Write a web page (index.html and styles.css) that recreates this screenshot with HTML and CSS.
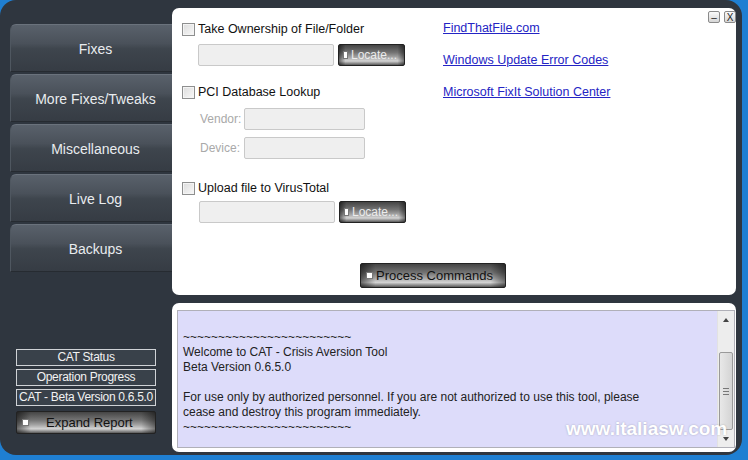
FILE: index.html
```html
<!DOCTYPE html>
<html lang="en">

<head>
    <meta charset="UTF-8">
    <title>CAT - Crisis Aversion Tool</title>
    <link rel="stylesheet" href="styles.css">
</head>

<body>
    <div class="window">
        <div class="sidebar">
            <div class="nav">
                <div class="nav-btn">Fixes</div>
                <div class="nav-btn">More Fixes/Tweaks</div>
                <div class="nav-btn">Miscellaneous</div>
                <div class="nav-btn">Live Log</div>
                <div class="nav-btn">Backups</div>
            </div>

            <div class="status">
                <div class="status-box">CAT Status</div>
                <div class="status-box">Operation Progress</div>
                <div class="status-box">CAT - Beta Version 0.6.5.0</div>
                <div class="metal expand"><span class="dot"></span>Expand Report</div>
            </div>
        </div>

        <div class="main">
            <div class="panel top-panel">
                <div class="win-ctrls">
                    <span class="ctrl">&ndash;</span>
                    <span class="ctrl">X</span>
                </div>

                <div class="form-area">
                    <div class="form">
                        <label class="check-row"><span class="checkbox"></span>Take Ownership of File/Folder</label>
                        <div class="path-row">
                            <span class="field path"></span>
                            <span class="metal locate"><span class="dot"></span>Locate...</span>
                        </div>

                        <label class="check-row pci"><span class="checkbox"></span>PCI Database Lookup</label>
                        <div class="kv-row">
                            <span class="kv-label">Vendor:</span>
                            <span class="field kv"></span>
                        </div>
                        <div class="kv-row">
                            <span class="kv-label">Device:</span>
                            <span class="field kv"></span>
                        </div>

                        <label class="check-row upload"><span class="checkbox"></span>Upload file to VirusTotal</label>
                        <div class="path-row second">
                            <span class="field path"></span>
                            <span class="metal locate"><span class="dot"></span>Locate...</span>
                        </div>
                    </div>

                    <div class="links">
                        <a href="#">FindThatFile.com</a>
                        <a href="#">Windows Update Error Codes</a>
                        <a href="#">Microsoft FixIt Solution Center</a>
                    </div>
                </div>

                <div class="metal process"><span class="dot"></span>Process Commands</div>
            </div>

            <div class="panel log-panel">
                <div class="log">
                    <div class="log-text">
                        <p>~~~~~~~~~~~~~~~~~~~~~~~~</p>
                        <p>Welcome to CAT - Crisis Aversion Tool</p>
                        <p>Beta Version 0.6.5.0</p>
                        <p>&nbsp;</p>
                        <p>For use only by authorized personnel. If you are not authorized to use this tool, please</p>
                        <p>cease and destroy this program immediately.</p>
                        <p>~~~~~~~~~~~~~~~~~~~~~~~~</p>
                    </div>
                    <div class="scrollbar">
                        <span class="arrow"><span class="tri up"></span></span>
                        <span class="track">
                            <span class="thumb"><span class="grip"></span></span>
                        </span>
                        <span class="arrow"><span class="tri down"></span></span>
                    </div>
                </div>
            </div>
        </div>

        <div class="watermark">www.italiasw.com</div>
    </div>
</body>

</html>
```

FILE: styles.css
```css
body {
    margin: 0;
    width: 748px;
    height: 460px;
    overflow: hidden;
    background-color: #1f7fd2;
    font-family: "Liberation Sans", Arial, sans-serif;
    font-size: 12px;
}

.window {
    position: relative;
    display: flex;
    width: 742px;
    height: 455px;
    background-color: #2f363f;
    border-radius: 16px;
}

/* left column */

.sidebar {
    display: flex;
    flex-direction: column;
    justify-content: space-between;
    width: 172px;
    padding: 24px 0 21px 0;
    box-sizing: border-box;
}

.nav {
    display: flex;
    flex-direction: column;
    gap: 2px;
    padding-left: 10px;
}

.nav-btn {
    height: 48px;
    line-height: 48px;
    text-align: center;
    margin-right: -8px;
    color: #e9ecef;
    font-size: 14px;
    background: linear-gradient(#59616b, #4a515a 40%, #3e454d 52%, #363c44);
    border-top: 1px solid #6a727c;
    border-left: 1px solid #4f5760;
    border-bottom: 1px solid #262b31;
    border-radius: 6px 0 0 0;
    box-sizing: border-box;
}

.status {
    display: flex;
    flex-direction: column;
    gap: 3px;
    padding-left: 16px;
}

.status-box {
    width: 140px;
    height: 17px;
    line-height: 15px;
    box-sizing: border-box;
    border: 1px solid #cfd2d6;
    background-color: #39414a;
    color: #f2f2f2;
    text-align: center;
    white-space: nowrap;
    letter-spacing: -0.3px;
}

/* metallic buttons */

.metal {
    display: flex;
    align-items: center;
    box-sizing: border-box;
    border: 1px solid #222;
    border-radius: 2px;
    background:
        linear-gradient(to right, rgba(0, 0, 0, 0.5), rgba(0, 0, 0, 0) 10%, rgba(0, 0, 0, 0) 90%, rgba(0, 0, 0, 0.45)),
        linear-gradient(#454545, #747474 38%, #a6a6a6 62%, #d4d4d4 80%, #5a5a5a 100%);
    color: #111;
}

.dot {
    width: 5px;
    height: 5px;
    margin: 0 3px 0 5px;
    border: 1px solid #777;
    background-color: #fff;
    flex-shrink: 0;
}

.expand {
    width: 140px;
    height: 23px;
    margin-top: 2px;
    font-size: 13px;
}

.expand .dot {
    margin: 0 17px 0 5px;
}

.locate {
    width: 67px;
    height: 22px;
    color: #ececec;
    font-size: 12px;
}

.locate .dot {
    width: 3px;
    height: 6px;
    margin: 0 3px 0 4px;
}

.process {
    width: 146px;
    height: 25px;
    margin: 0 0 0 178px;
    font-size: 13px;
}

/* main column */

.main {
    display: flex;
    flex-direction: column;
    gap: 8px;
    flex: 1;
    padding: 8px 6px 3px 0;
}

.panel {
    background-color: #fff;
    border-radius: 7px;
}

.top-panel {
    position: relative;
    height: 287px;
    padding: 11px 10px 0 10px;
    box-sizing: border-box;
}

.win-ctrls {
    position: absolute;
    top: 3px;
    right: 0;
    display: flex;
    gap: 4px;
}

.ctrl {
    width: 12px;
    height: 12px;
    line-height: 12px;
    font-size: 10px;
    text-align: center;
    border: 1px solid #8a8a8a;
    border-radius: 2px;
    background: linear-gradient(#fafafa, #d6d6d6);
    color: #222;
    box-sizing: border-box;
}

.form-area {
    display: flex;
    height: 244px;
}

.form {
    display: flex;
    flex-direction: column;
    width: 261px;
}

.check-row {
    display: flex;
    align-items: center;
    gap: 3px;
    height: 18px;
    margin-top: 1px;
    color: #111;
    font-size: 12.5px;
}

.checkbox {
    width: 13px;
    height: 13px;
    box-sizing: border-box;
    border: 1px solid #8e8f8f;
    background: linear-gradient(135deg, #dcdcdc, #f8f8f8);
    box-shadow: inset 0 0 0 1px #f4f4f4;
}

.check-row.pci {
    margin-top: 17px;
}

.check-row.upload {
    margin-top: 20px;
}

.path-row {
    display: flex;
    gap: 4px;
    margin: 6px 0 0 16px;
}

.path-row.second {
    margin: 4px 0 0 17px;
}

.field {
    display: block;
    height: 22px;
    box-sizing: border-box;
    border: 1px solid #c9c9c9;
    border-radius: 2px;
    background-color: #efefef;
}

.path {
    width: 136px;
}

.kv-row {
    display: flex;
    align-items: center;
    margin: 7px 0 0 18px;
}

.kv-label {
    width: 44px;
    color: #a9a9a9;
    font-size: 12px;
}

.kv {
    width: 121px;
}

.links {
    display: flex;
    flex-direction: column;
    gap: 17px;
    padding-top: 2px;
}

.links a {
    color: #2424c4;
    font-size: 12.5px;
    line-height: 15px;
}

/* log */

.log-panel {
    height: 149px;
    padding: 7px 1px 0 5px;
    box-sizing: border-box;
}

.log {
    display: flex;
    height: 136px;
    border: 1px solid #b0b0b8;
    background-color: #dddcfa;
}

.log-text {
    flex: 1;
    padding: 19px 0 0 5px;
    color: #222;
    line-height: 15px;
}

.log-text p {
    margin: 0;
}

.scrollbar {
    display: flex;
    flex-direction: column;
    width: 16px;
    background-color: #ededed;
    border-left: 1px solid #e2e2e2;
}

.arrow {
    display: flex;
    align-items: center;
    justify-content: center;
    height: 17px;
}

.tri {
    width: 0;
    height: 0;
    border-left: 3px solid transparent;
    border-right: 3px solid transparent;
}

.tri.up {
    border-bottom: 4px solid #444;
}

.tri.down {
    border-top: 4px solid #444;
}

.track {
    display: flex;
    flex-direction: column;
    justify-content: flex-end;
    flex: 1;
}

.thumb {
    display: flex;
    align-items: center;
    justify-content: center;
    height: 78px;
    margin: 0 1px;
    border: 1px solid #9a9a9a;
    border-radius: 2px;
    background: linear-gradient(to right, #e8e8e8, #d4d4d4);
    box-sizing: border-box;
}

.grip {
    width: 6px;
    height: 5px;
    border-top: 1px solid #777;
    border-bottom: 1px solid #777;
    background: linear-gradient(#fff0 40%, #777 40%, #777 60%, #fff0 60%);
}

.watermark {
    position: absolute;
    left: 566px;
    top: 418px;
    color: #fff;
    font-size: 19px;
    font-weight: bold;
    text-shadow: 0 0 2px rgba(0, 0, 0, 0.25);
}
```
